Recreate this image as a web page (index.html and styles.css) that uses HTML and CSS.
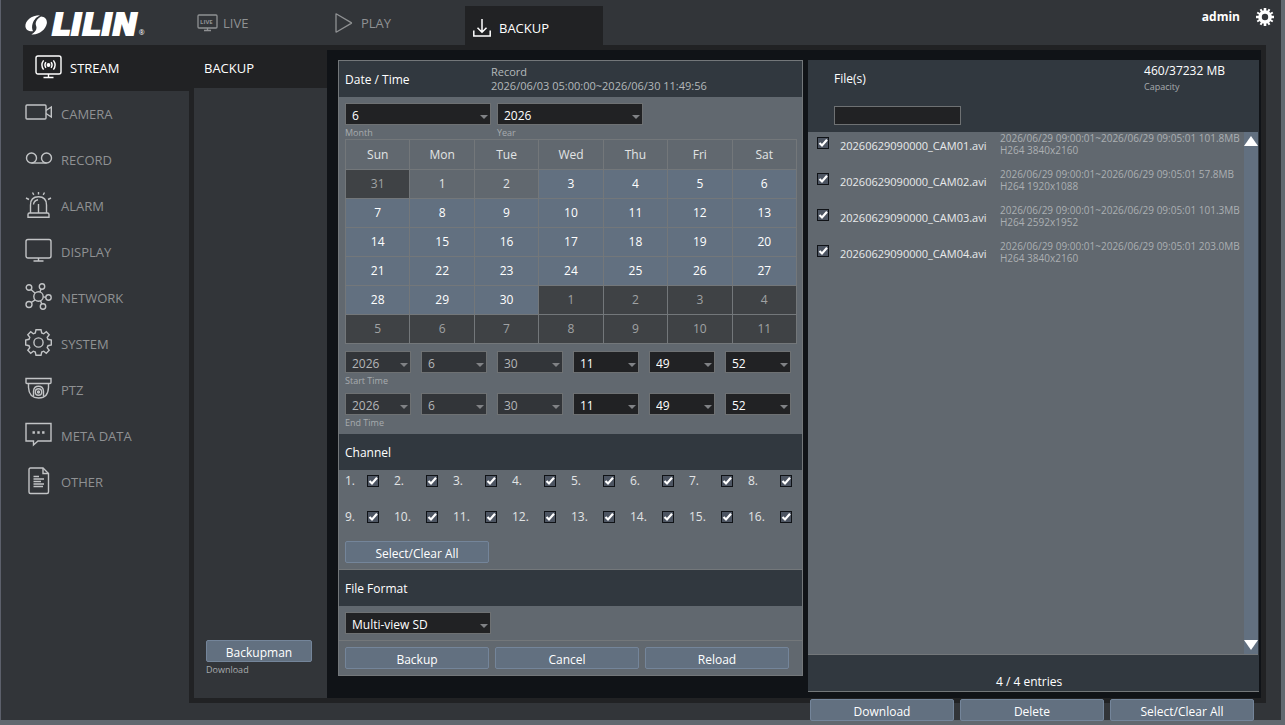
FILE: index.html
```html
<!DOCTYPE html>
<html lang="en">
<head>
    <meta charset="UTF-8">
    <meta name="viewport" content="width=device-width, initial-scale=1.0">
    <title>LILIN - Backup</title>
    <link rel="stylesheet" href="styles.css">
</head>
<body>

<div class="app">
    <header class="topbar">
        <a href="#" class="logo">
            <svg width="23" height="20" viewBox="0 0 23 20" fill="#fff">
                <path d="M15 0.3C6 0.4 0.2 6 0.4 11.2C0.6 14.4 3.4 16.6 8 16.2C5.8 11.6 7.4 4.4 15 0.300Z"/>
                <path d="M16 1.4C12 3.6 9.8 7.2 11 10.4C12.2 13.4 11.4 16.4 6.400 19.400C14 20.200 20.800 14.600 21.800 8.600C22.400 4.200 20 1.800 16 1.400Z"/>
                <path d="M12.700 2C9.200 5.400 8.200 8.400 9.200 11.400C9.900 13.800 9 16.400 7 18" fill="none" stroke="#323539"/>
            </svg>
            <span class="logo-text">LILIN</span><span class="logo-mark">&reg;</span>
        </a>
        <nav class="tabs">
            <a href="#" class="tab">
                <svg width="22" height="18" viewBox="0 0 22 18" fill="none" stroke="currentColor">
                    <rect x="1" y="1" width="19" height="13" rx="1" stroke-width="1.3"/>
                    <path d="M10.5 14v2M7 16.5h7" stroke-width="1.3"/>
                    <text x="3" y="10" class="live-label">LIVE</text>
                </svg>
                LIVE
            </a>
            <a href="#" class="tab">
                <svg class="play-icon" width="18" height="20" viewBox="0 0 18 20" fill="none" stroke="currentColor" stroke-width="1.3" stroke-linejoin="round">
                    <path d="M1 1.2V18.8Q1 19.2 1.5 19L16.2 10.4Q16.8 10 16.2 9.6L1.5 1Q1 0.8 1 1.2Z"/>
                </svg>
                PLAY
            </a>
            <a href="#" class="tab active">
                <svg width="18" height="18" viewBox="0 0 18 18" fill="none" stroke="currentColor" stroke-width="1.5">
                    <path d="M9 0v13M4.5 8.8L9 13.3L13.5 8.8"/>
                    <path d="M0.8 11.5V17H17.2V11.5"/>
                </svg>
                BACKUP
            </a>
        </nav>
        <div class="user">
            <span>admin</span>
            <button type="button" class="gear-button" aria-label="Settings">
                <svg width="18" height="18" viewBox="-9 -9 18 18">
                    <circle r="5" fill="none" stroke="#fff" stroke-width="3.6"/>
                    <g stroke="#fff" stroke-width="2.6">
                        <path d="M0-9V-6M0 9V6M-9 0H-6M9 0H6"/>
                        <path d="M4.5-7.8L3-5.2M-4.5 7.8L-3 5.2M-4.5-7.8L-3-5.2M4.5 7.8L3 5.2" stroke-width="2"/>
                        <path d="M7.8-4.5L5.2-3M-7.8 4.5L-5.2 3M-7.8-4.5L-5.2-3M7.8 4.5L5.2 3" stroke-width="2"/>
                    </g>
                </svg>
            </button>
        </div>
    </header>

    <div class="main">
        <nav class="sidebar">
            <a href="#" class="side-item active">
                <svg width="28" height="28" viewBox="0 0 28 28" class="icon">
                    <rect x="1" y="3" width="25" height="18" rx="2"/>
                    <path d="M13.5 21v3M8.5 24.5h10"/>
                    <circle cx="13.5" cy="12" r="1.2" fill="currentColor"/>
                    <path d="M10.9 9.2Q8.9 12 10.9 14.8M8.6 7.4Q5.2 12 8.6 16.6M16.1 9.2Q18.1 12 16.1 14.8M18.4 7.4Q21.8 12 18.4 16.6"/>
                </svg>
                STREAM
            </a>
            <a href="#" class="side-item">
                <svg width="28" height="28" viewBox="0 0 28 28" class="icon">
                    <rect x="1" y="6" width="20" height="14" rx="1"/>
                    <path d="M21 11.5L26.3 8V18L21 14.5"/>
                </svg>
                CAMERA
            </a>
            <a href="#" class="side-item">
                <svg width="28" height="28" viewBox="0 0 28 28" class="icon">
                    <circle cx="6.5" cy="13" r="5"/>
                    <circle cx="21.5" cy="13" r="5"/>
                    <path d="M6.5 18H21.5"/>
                </svg>
                RECORD
            </a>
            <a href="#" class="side-item">
                <svg width="28" height="28" viewBox="0 0 28 28" class="icon">
                    <path d="M3 26.200V23.500Q3 22 4.500 22H22.500Q24 22 24 23.500V26.200Z"/>
                    <path d="M5.500 22V14Q5.500 5.800 13.500 5.800T21.500 14V22M13.500 13V22M8.500 13.500Q8.800 9.500 13 8.700"/>
                    <path d="M13.500 1V3.500M7.500 1.500L8.800 3.800M19.500 1.500L18.200 3.800M1 7L4 8.500M26 7L23 8.500"/>
                </svg>
                ALARM
            </a>
            <a href="#" class="side-item">
                <svg width="28" height="28" viewBox="0 0 28 28" class="icon">
                    <rect x="1" y="2.500" width="25" height="18.500" rx="2"/>
                    <path d="M13.500 21V23.500M8.500 24H18.500"/>
                </svg>
                DISPLAY
            </a>
            <a href="#" class="side-item">
                <svg width="28" height="28" viewBox="0 0 28 28" class="icon">
                    <circle cx="13.500" cy="13.500" r="4.700"/>
                    <circle cx="4" cy="4.500" r="2.800"/>
                    <circle cx="17" cy="3.500" r="2.700"/>
                    <circle cx="23.500" cy="14.500" r="2.700"/>
                    <circle cx="18" cy="23.500" r="2.700"/>
                    <circle cx="4" cy="21.500" r="3"/>
                    <path d="M6 6.500L10.200 10.200M16 6L15 9M18.200 13.900L20.800 14.200M15.500 17.800L16.800 21M10.200 16.800L6.200 19.500"/>
                </svg>
                NETWORK
            </a>
            <a href="#" class="side-item">
                <svg width="28" height="28" viewBox="-13.500 -13.500 28 28" class="icon">
                    <circle r="4.600"/>
                    <path d="M-2.500-12.800H2.500L3.200-9.500L5.200-8.700L7.800-10.700L10.700-7.800L8.700-5.200L9.500-3.200L12.800-2.500V2.500L9.500 3.200L8.700 5.200L10.700 7.800L7.800 10.700L5.200 8.700L3.200 9.500L2.500 12.800H-2.500L-3.200 9.500L-5.200 8.700L-7.800 10.700L-10.700 7.800L-8.700 5.200L-9.500 3.200L-12.800 2.500V-2.500L-9.500-3.200L-8.700-5.200L-10.700-7.800L-7.800-10.700L-5.200-8.700L-3.200-9.500Z"/>
                </svg>
                SYSTEM
            </a>
            <a href="#" class="side-item">
                <svg width="28" height="28" viewBox="0 0 28 28" class="icon">
                    <path d="M1 3.500H26V7.500Q26 8.500 25 8.500H2Q1 8.500 1 7.500Z"/>
                    <path d="M3.500 8.500V12.500Q4 22.800 13.500 23T23.500 12.500V8.500"/>
                    <path d="M8.500 21.500V16Q9 11.300 13.500 11.300T18.500 16V21.500"/>
                    <circle cx="13.500" cy="17" r="3.200"/>
                    <circle cx="13.500" cy="17" r="1" fill="currentColor"/>
                </svg>
                PTZ
            </a>
            <a href="#" class="side-item">
                <svg width="28" height="28" viewBox="0 0 28 28" class="icon">
                    <path d="M1 2.500H26V20H13L8.500 24V20H1Z"/>
                    <path d="M7.500 11.500h2.400M12.300 11.500h2.400M17.100 11.500h2.400" stroke-width="2.400"/>
                </svg>
                META DATA
            </a>
            <a href="#" class="side-item">
                <svg width="28" height="28" viewBox="0 0 28 28" class="icon">
                    <path d="M5.500 1H18L23.500 6.500V25Q23.500 26.500 22 26.500H5.500Q4 26.500 4 25V2.500Q4 1 5.500 1Z"/>
                    <path d="M18 1V6.500H23.500M8.500 9.500H14M8.500 12H19M8.500 14.500H16M8.500 17H19M8.500 19.500H18"/>
                </svg>
                OTHER
            </a>
        </nav>

        <div class="frame">
            <aside class="submenu">
                <a href="#" class="submenu-title">BACKUP</a>
                <div class="submenu-bottom">
                    <button type="button" id="backupman" class="btn">Backupman</button>
                    <label for="backupman" class="hint">Download</label>
                </div>
            </aside>

            <div class="content">
                <form class="panel">
                    <div class="panel-head">
                        <h2>Date / Time</h2>
                        <div class="record">Record<br>2026/06/03 05:00:00~2026/06/30 11:49:56</div>
                    </div>
                    <div class="date-body">
                        <div class="month-year">
                            <div class="field">
                                <select id="month"><option>6</option></select>
                                <label for="month" class="hint">Month</label>
                            </div>
                            <div class="field">
                                <select id="year"><option>2026</option></select>
                                <label for="year" class="hint">Year</label>
                            </div>
                        </div>
                        <table class="calendar">
                            <thead>
                                <tr><th>Sun</th><th>Mon</th><th>Tue</th><th>Wed</th><th>Thu</th><th>Fri</th><th>Sat</th></tr>
                            </thead>
                            <tbody>
                                <tr><td class="out">31</td><td>1</td><td>2</td><td class="rec">3</td><td class="rec">4</td><td class="rec">5</td><td class="rec">6</td></tr>
                                <tr class="rec"><td>7</td><td>8</td><td>9</td><td>10</td><td>11</td><td>12</td><td>13</td></tr>
                                <tr class="rec"><td>14</td><td>15</td><td>16</td><td>17</td><td>18</td><td>19</td><td>20</td></tr>
                                <tr class="rec"><td>21</td><td>22</td><td>23</td><td>24</td><td>25</td><td>26</td><td>27</td></tr>
                                <tr><td class="rec">28</td><td class="rec">29</td><td class="rec">30</td><td class="out">1</td><td class="out">2</td><td class="out">3</td><td class="out">4</td></tr>
                                <tr class="out"><td>5</td><td>6</td><td>7</td><td>8</td><td>9</td><td>10</td><td>11</td></tr>
                            </tbody>
                        </table>
                        <div class="time-row">
                            <select id="start" disabled><option>2026</option></select>
                            <select disabled aria-label="Start month"><option>6</option></select>
                            <select disabled aria-label="Start day"><option>30</option></select>
                            <select aria-label="Start hour"><option>11</option></select>
                            <select aria-label="Start minute"><option>49</option></select>
                            <select aria-label="Start second"><option>52</option></select>
                        </div>
                        <label for="start" class="hint">Start Time</label>
                        <div class="time-row">
                            <select id="end" disabled><option>2026</option></select>
                            <select disabled aria-label="End month"><option>6</option></select>
                            <select disabled aria-label="End day"><option>30</option></select>
                            <select aria-label="End hour"><option>11</option></select>
                            <select aria-label="End minute"><option>49</option></select>
                            <select aria-label="End second"><option>52</option></select>
                        </div>
                        <label for="end" class="hint">End Time</label>
                    </div>

                    <div class="panel-head"><h2>Channel</h2></div>
                    <div class="channel-body">
                        <div class="channels">
                            <label>1.<input type="checkbox" checked></label>
                            <label>2.<input type="checkbox" checked></label>
                            <label>3.<input type="checkbox" checked></label>
                            <label>4.<input type="checkbox" checked></label>
                            <label>5.<input type="checkbox" checked></label>
                            <label>6.<input type="checkbox" checked></label>
                            <label>7.<input type="checkbox" checked></label>
                            <label>8.<input type="checkbox" checked></label>
                            <label>9.<input type="checkbox" checked></label>
                            <label>10.<input type="checkbox" checked></label>
                            <label>11.<input type="checkbox" checked></label>
                            <label>12.<input type="checkbox" checked></label>
                            <label>13.<input type="checkbox" checked></label>
                            <label>14.<input type="checkbox" checked></label>
                            <label>15.<input type="checkbox" checked></label>
                            <label>16.<input type="checkbox" checked></label>
                        </div>
                        <button type="button" class="btn">Select/Clear All</button>
                    </div>

                    <div class="panel-head"><h2><label for="format">File Format</label></h2></div>
                    <div class="format-body">
                        <select id="format"><option>Multi-view SD</option></select>
                    </div>
                    <div class="buttons panel-buttons">
                        <button type="button" class="btn">Backup</button>
                        <button type="button" class="btn">Cancel</button>
                        <button type="button" class="btn">Reload</button>
                    </div>
                </form>

                <section class="files">
                    <div class="files-panel">
                        <div class="files-head">
                            <div class="files-search">
                                <label for="search">File(s)</label>
                                <input type="text" id="search">
                            </div>
                            <div class="capacity">460/37232 MB<span class="hint">Capacity</span></div>
                        </div>
                        <div class="files-list">
                            <ul>
                                <li>
                                    <input type="checkbox" id="file1" checked>
                                    <label for="file1">20260629090000_CAM01.avi</label>
                                    <div class="meta">2026/06/29 09:00:01~2026/06/29 09:05:01 101.8MB<br>H264 3840x2160</div>
                                </li>
                                <li>
                                    <input type="checkbox" id="file2" checked>
                                    <label for="file2">20260629090000_CAM02.avi</label>
                                    <div class="meta">2026/06/29 09:00:01~2026/06/29 09:05:01 57.8MB<br>H264 1920x1088</div>
                                </li>
                                <li>
                                    <input type="checkbox" id="file3" checked>
                                    <label for="file3">20260629090000_CAM03.avi</label>
                                    <div class="meta">2026/06/29 09:00:01~2026/06/29 09:05:01 101.3MB<br>H264 2592x1952</div>
                                </li>
                                <li>
                                    <input type="checkbox" id="file4" checked>
                                    <label for="file4">20260629090000_CAM04.avi</label>
                                    <div class="meta">2026/06/29 09:00:01~2026/06/29 09:05:01 203.0MB<br>H264 3840x2160</div>
                                </li>
                            </ul>
                            <div class="scrollbar">
                                <button type="button" aria-label="Scroll up">
                                    <svg width="14" height="10" viewBox="0 0 14 10"><path d="M7 0L14 10H0Z" fill="#fff"/></svg>
                                </button>
                                <button type="button" aria-label="Scroll down">
                                    <svg width="14" height="10" viewBox="0 0 14 10"><path d="M7 10L14 0H0Z" fill="#fff"/></svg>
                                </button>
                            </div>
                        </div>
                        <div class="files-foot">4 / 4 entries</div>
                    </div>
                    <div class="buttons">
                        <button type="button" class="btn">Download</button>
                        <button type="button" class="btn">Delete</button>
                        <button type="button" class="btn">Select/Clear All</button>
                    </div>
                </section>
            </div>
        </div>
    </div>
</div>

</body>
</html>
```
FILE: styles.css
```css
* {
    box-sizing: border-box;
}
body {
    margin: 0;
    padding: 0 4px 5px 0;
    background: #61686f;
    color: #fff;
    font-family: "Open Sans", "Noto Sans", sans-serif;
    font-size: 12px;
    line-height: 16px;
}
a {
    color: inherit;
    text-decoration: none;
}
svg {
    flex-shrink: 0;
}
.app {
    display: flex;
    flex-direction: column;
    height: calc(100vh - 5px);
    min-height: 720px;
    border-left: 1px solid #5c606b;
    background: #323539;
}

/* top bar */
.topbar {
    display: flex;
    height: 45px;
    flex-shrink: 0;
}
.logo {
    display: flex;
    align-items: center;
    width: 188px;
    padding: 4px 0 0 24px;
}
.logo-text {
    font-family: "DejaVu Sans", sans-serif;
    font-size: 30px;
    font-weight: bold;
    font-style: italic;
    line-height: 30px;
    padding-left: 4px;
    -webkit-text-stroke: 2px #fff;
}
.logo-mark {
    align-self: flex-end;
    padding: 0 0 4px 1px;
    font-size: 7px;
}
.tabs {
    display: flex;
    flex: 1;
}
.tab {
    display: flex;
    align-items: center;
    gap: 4px;
    width: 138px;
    padding-left: 8px;
    color: #8f9193;
    font-size: 13px;
}
.tab.active {
    gap: 8px;
    margin-top: 6px;
    padding-top: 4px;
    background: #212224;
    color: #fff;
}
.play-icon {
    margin-right: 4px;
}
.live-label {
    font-size: 6px;
    font-weight: bold;
    fill: currentColor;
    stroke: none;
}
.user {
    display: flex;
    align-items: center;
    gap: 16px;
    height: 33px;
    padding-right: 7px;
    font-weight: bold;
}
.gear-button {
    padding: 0;
    border: 0;
    background: none;
    line-height: 0;
}

/* left menu */
.main {
    display: flex;
    flex: 1;
    min-height: 0;
    padding: 0 15px 17px 22px;
}
.sidebar {
    width: 166px;
    flex-shrink: 0;
}
.side-item {
    display: flex;
    align-items: center;
    gap: 8px;
    height: 46px;
    padding-left: 2px;
    color: #8f9193;
    font-size: 13px;
}
.side-item.active {
    gap: 7px;
    padding-left: 12px;
    background: #212224;
    color: #fff;
}
.icon {
    margin-bottom: 2px;
    fill: none;
    stroke: currentColor;
    stroke-width: 1.4;
    color: #c2c4c6;
}
.active .icon {
    color: #fff;
}

/* working area */
.frame {
    display: flex;
    flex: 1;
    min-width: 0;
    border: 5px solid #212224;
}
.submenu {
    display: flex;
    flex-direction: column;
    justify-content: space-between;
    width: 133px;
    flex-shrink: 0;
}
.submenu-title {
    height: 38px;
    padding: 10px;
    background: #212224;
    font-size: 13px;
}
.submenu-bottom {
    padding: 0 15px 22px 12px;
}
.submenu-bottom .btn {
    width: 100%;
}
.content {
    display: grid;
    grid-template-columns: minmax(0, 465fr) minmax(0, 451fr);
    align-items: start;
    gap: 5px;
    flex: 1;
    min-width: 0;
    padding: 10px 2px 0 11px;
    background: #101317;
}
.hint {
    display: block;
    padding-top: 2px;
    color: #a7abae;
    font-size: 9px;
    line-height: 12px;
}

/* controls */
.btn {
    height: 22px;
    padding: 4px 0 0;
    border: 1px solid #74859a;
    border-radius: 2px;
    background: #627080;
    color: #fff;
    font: inherit;
    line-height: 16px;
}
select {
    appearance: none;
    width: 66px;
    height: 22px;
    padding: 3px 6px 0;
    border: 1px solid #6e7173;
    border-radius: 0;
    background: #212224 url("data:image/svg+xml,%3Csvg xmlns='http://www.w3.org/2000/svg' width='8' height='4'%3E%3Cpath d='M0 0H8L4 4Z' fill='%23808285'/%3E%3C/svg%3E") no-repeat right 2px top 11px;
    color: #fff;
    font: inherit;
}
select:disabled {
    background-color: #323539;
    color: #b4b6b8;
    opacity: 1;
}
input[type="checkbox"] {
    appearance: none;
    flex-shrink: 0;
    width: 12px;
    height: 12px;
    margin: 0;
    border: 1px solid #101317;
    background: #4d5562;
}
input[type="checkbox"]:checked {
    background-image: url("data:image/svg+xml,%3Csvg xmlns='http://www.w3.org/2000/svg' width='10' height='10'%3E%3Cpath d='M1.500 5L4 7.500L9 1.800' fill='none' stroke='white' stroke-width='2.200'/%3E%3C/svg%3E");
}
.buttons {
    display: flex;
    gap: 6px;
}
.buttons .btn {
    width: 144px;
}

/* backup form */
.panel {
    border: 1px solid #73777a;
    background: #61686f;
}
.panel-head {
    display: flex;
    align-items: center;
    height: 36px;
    padding-left: 6px;
    background: #31383f;
}
.panel-head h2 {
    width: 146px;
    margin: 0;
    padding-top: 2px;
    font-size: 12px;
    font-weight: normal;
}
.record {
    color: #b4b8bb;
    font-size: 11px;
    line-height: 14px;
    white-space: nowrap;
}
.date-body {
    padding: 6px 5px 5px 6px;
}
.month-year {
    display: flex;
    gap: 6px;
}
.month-year select,
.format-body select {
    width: 146px;
}
.calendar {
    width: 100%;
    margin-bottom: 7px;
    border-collapse: collapse;
    table-layout: fixed;
}
.calendar th,
.calendar td {
    height: 29px;
    padding: 0;
    border: 1px solid #73777a;
    font-weight: normal;
    text-align: center;
    color: #e2e4e5;
}
.calendar th {
    height: 30px;
}
.calendar .rec,
.calendar .rec td {
    background: #627080;
    color: #fff;
}
.calendar .out,
.calendar .out td {
    background: #3f4245;
    color: #a0a2a4;
}
.time-row {
    display: flex;
    gap: 10px;
}
.hint + .time-row {
    margin-top: 6px;
}
.channel-body {
    padding: 3px 0 6px 6px;
    border-bottom: 1px solid #73777a;
}
.channels {
    display: grid;
    grid-template-columns: 49px repeat(7, 59px);
    row-gap: 20px;
    margin-bottom: 16px;
    color: #e2e4e5;
}
.channels label {
    display: flex;
    align-items: center;
    justify-content: space-between;
    padding-right: 15px;
}
.channel-body .btn {
    width: 144px;
}
.format-body {
    padding: 6px;
    border-bottom: 1px solid #73777a;
}
.panel-buttons {
    padding: 6px;
}

/* file list */
.files-panel {
    border-bottom: 1px solid #73777a;
    background: #31383f;
}
.files-head {
    display: flex;
    justify-content: space-between;
    height: 72px;
    padding: 3px 34px 0 26px;
}
.files-search {
    display: flex;
    flex-direction: column;
    gap: 19px;
    padding-top: 8px;
}
.files-search input {
    width: 127px;
    height: 19px;
    padding: 0 4px;
    border: 1px solid #6e7173;
    background: #212224;
    color: #fff;
    font: inherit;
}
.files-list {
    display: flex;
    height: 523px;
    margin-right: 1px;
    border-bottom: 1px solid #73777a;
    background: #61686f;
}
.files-list ul {
    flex: 1;
    min-width: 0;
    margin: 0;
    padding: 0 0 0 9px;
    list-style: none;
}
.files-list li {
    display: flex;
    align-items: flex-start;
    height: 36px;
}
.files-list input {
    margin-top: 5px;
}
.files-list label {
    width: 160px;
    margin: 6px 0 0 11px;
    flex-shrink: 0;
    font-size: 11px;
    color: #e8eaeb;
}
.meta {
    color: #abafb2;
    font-size: 10px;
    line-height: 12px;
    white-space: nowrap;
}
.scrollbar {
    display: flex;
    flex-direction: column;
    justify-content: space-between;
    width: 14px;
    padding: 4px 0;
    background: #627080;
}
.scrollbar button {
    padding: 0;
    border: 0;
    background: none;
    line-height: 0;
}
.files-foot {
    height: 36px;
    padding: 19px 0 0 188px;
}
.files > .buttons {
    padding: 7px 2px 0;
}
```
